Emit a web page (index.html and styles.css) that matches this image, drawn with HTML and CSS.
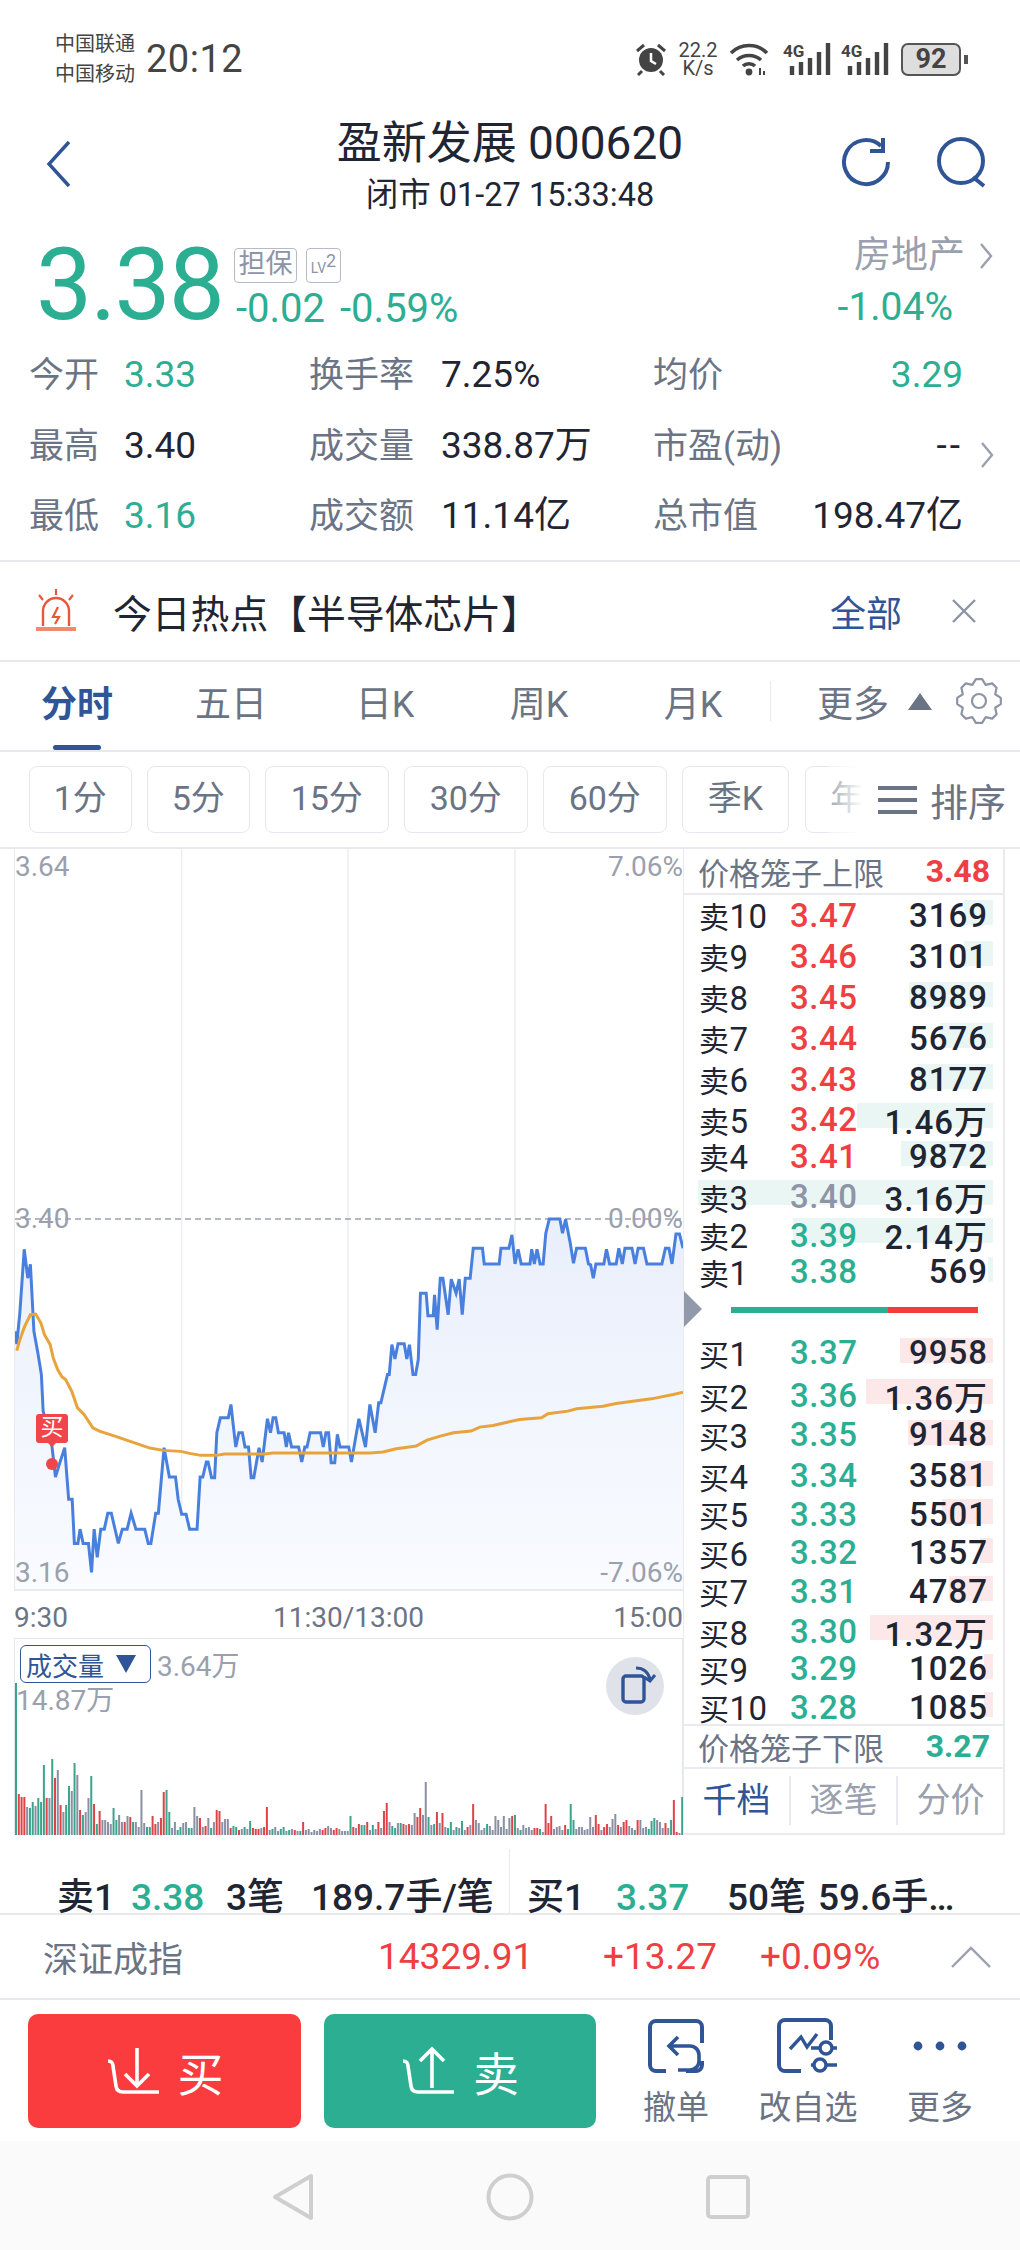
FILE: index.html
```html
<!DOCTYPE html>
<html lang="zh-CN">

<head>
    <meta charset="UTF-8">
    <title>盈新发展 000620</title>
    <link rel="stylesheet" href="styles.css">
</head>

<body>
    <div class="page">
        <!-- 状态栏 -->
        <div class="status">
            <div class="carrier"><span>中国联通</span><span>中国移动</span></div>
            <div class="clock">20:12</div>
            <div class="status-right">
                <svg class="st-alarm" viewBox="0 0 32 34" width="32" height="34">
                    <circle cx="16" cy="18" r="12" fill="#444"/>
                    <path d="M16 11v8l5 3" fill="none" stroke="#fff" stroke-width="2.5"/>
                    <path d="M2 9l7-6M30 9l-7-6M7 29l-4 4M25 29l4 4" stroke="#444" stroke-width="3" fill="none"/>
                </svg>
                <div class="speed"><span>22.2</span><span>K/s</span></div>
                <svg class="st-wifi" viewBox="0 0 40 34" width="40" height="34">
                    <path d="M2 11c10-10 26-10 36 0M8 18c7-6 17-6 24 0M14 24c3-3 9-3 12 0" fill="none" stroke="#444" stroke-width="3.6"/>
                    <circle cx="20" cy="30" r="3.4" fill="#444"/>
                    <path d="M31 26v7M35 29v4" stroke="#444" stroke-width="2"/>
                </svg>
                <svg class="st-signal" viewBox="0 0 48 34" width="48" height="34">
                    <text x="0" y="15" class="st-4g">4G</text>
                    <path d="M9 24v9M18 20v13M27 16v17M36 10v23M45 1v32" stroke="#444" stroke-width="4.4" fill="none"/>
                </svg>
                <svg class="st-signal" viewBox="0 0 48 34" width="48" height="34">
                    <text x="0" y="15" class="st-4g">4G</text>
                    <path d="M9 24v9M18 20v13M27 16v17M36 10v23M45 1v32" stroke="#444" stroke-width="4.4" fill="none"/>
                </svg>
                <div class="battery">92</div>
                <div class="battery-tip"></div>
            </div>
        </div>

        <!-- 标题 -->
        <div class="head">
            <svg class="back" viewBox="0 0 26 48" width="26" height="48">
                <path d="M23 2L3 24l20 22" fill="none" stroke="#2f5597" stroke-width="3.4"/>
            </svg>
            <div class="head-title">
                <div class="stock-name">盈新发展 <span class="stock-code">000620</span></div>
                <div class="stock-time">闭市 01-27 15:33:48</div>
            </div>
            <div class="head-tools">
                <svg viewBox="0 0 52 52" width="52" height="52">
                    <path d="M47 26a22 22 0 1 1-7-16" fill="none" stroke="#2f5597" stroke-width="4"/>
                    <path d="M42 2v13H29" fill="none" stroke="#2f5597" stroke-width="4"/>
                </svg>
                <svg viewBox="0 0 52 52" width="52" height="52">
                    <circle cx="25" cy="25" r="22" fill="none" stroke="#2f5597" stroke-width="4"/>
                    <path d="M37 41l11 9" fill="none" stroke="#2f5597" stroke-width="4"/>
                </svg>
            </div>
        </div>

        <!-- 价格 -->
        <div class="quote">
            <div class="last green">3.38</div>
            <div class="quote-mid">
                <div class="tags"><span class="tag">担保</span><span class="tag tag-lv">LV<sup>2</sup></span></div>
                <div class="change green"><span>-0.02</span><span>-0.59%</span></div>
            </div>
            <div class="sector">
                <div class="sector-name">房地产
                    <svg class="chev" viewBox="0 0 16 28" width="16" height="28"><path d="M3 2l10 12L3 26" fill="none" stroke="#9aa0ae" stroke-width="2.4"/></svg>
                </div>
                <div class="sector-pct green">-1.04%</div>
            </div>
        </div>

        <div class="stats">
            <div class="stat"><span class="k k2">今开</span><span class="green">3.33</span></div>
            <div class="stat"><span class="k k3">换手率</span><span>7.25%</span></div>
            <div class="stat stat-end"><span class="k">均价</span><span class="green">3.29</span></div>
            <div class="stat"><span class="k k2">最高</span><span>3.40</span></div>
            <div class="stat"><span class="k k3">成交量</span><span>338.87万</span></div>
            <div class="stat stat-end"><span class="k">市盈(动)</span><span class="dashes">--</span></div>
            <div class="stat"><span class="k k2">最低</span><span class="green">3.16</span></div>
            <div class="stat"><span class="k k3">成交额</span><span>11.14亿</span></div>
            <div class="stat stat-end"><span class="k">总市值</span><span>198.47亿</span></div>
            <svg class="stat-more" viewBox="0 0 16 28" width="16" height="28"><path d="M3 2l10 12L3 26" fill="none" stroke="#9aa0ae" stroke-width="2.4"/></svg>
        </div>

        <!-- 今日热点 -->
        <div class="hot">
            <svg class="hot-icon" viewBox="0 0 44 44" width="44" height="44">
                <path d="M9 37V22a13 13 0 0 1 26 0v15" fill="none" stroke="#e8593b" stroke-width="2.4"/>
                <path d="M2 38h40v4H2z" fill="#f08a6c"/>
                <path d="M24 18l-5 10h6l-4 7" fill="none" stroke="#e8593b" stroke-width="2.2"/>
                <path d="M22 0v6M5 6l4 5M39 6l-4 5" stroke="#e8593b" stroke-width="2.2"/>
            </svg>
            <div class="hot-text">今日热点【半导体芯片】</div>
            <div class="hot-all">全部</div>
            <svg class="hot-close" viewBox="0 0 26 26" width="26" height="26"><path d="M2 2l22 22M24 2L2 24" stroke="#8d94a4" stroke-width="2.4"/></svg>
        </div>

        <!-- 周期切换 -->
        <div class="tabs">
            <div class="tab on">分时</div>
            <div class="tab">五日</div>
            <div class="tab">日K</div>
            <div class="tab">周K</div>
            <div class="tab">月K</div>
            <div class="tab-sep"></div>
            <div class="tab-more">更多</div>
            <div class="tri-up"></div>
            <svg class="gear" viewBox="0 0 48 48" width="48" height="48">
                <path d="M45.8 20.9L45.8 27.1 40.2 30.7 41.6 37.2 37.2 41.6 30.7 40.2 27.1 45.8 20.9 45.8 17.3 40.2 10.8 41.6 6.4 37.2 7.8 30.7 2.2 27.1 2.2 20.9 7.8 17.3 6.4 10.8 10.8 6.4 17.3 7.8 20.9 2.2 27.1 2.2 30.7 7.8 37.2 6.4 41.6 10.8 40.2 17.3z" fill="none" stroke="#8d94a4" stroke-width="2.2" stroke-linejoin="round"/>
                <circle cx="24" cy="24" r="7" fill="none" stroke="#8d94a4" stroke-width="2.2"/>
            </svg>
        </div>

        <div class="periods">
            <div class="period w1">1分</div>
            <div class="period w1">5分</div>
            <div class="period w2">15分</div>
            <div class="period w2">30分</div>
            <div class="period w2">60分</div>
            <div class="period w3">季K</div>
            <div class="period w3">年K</div>
            <div class="sort">
                <div class="sort-lines"><i></i><i></i><i></i></div>
                <span>排序</span>
            </div>
        </div>

        <div class="main">
            <div class="charts">
                <!-- 分时图 -->
                <div class="price-chart">
                    <svg class="price-svg" viewBox="33 -996 1519 2226" preserveAspectRatio="none">
                        <defs>
                            <linearGradient id="areaFill" x1="0" y1="0" x2="0" y2="1">
                                <stop offset="0" stop-color="#e9effb"/>
                                <stop offset="1" stop-color="#f9fbff"/>
                            </linearGradient>
                        </defs>
                        <path class="grid-line" d="M412 -996V1230M790 -996V1230M1170 -996V1230"/>
                        <polygon fill="url(#areaFill)" points="33,1230 33,455 37,493 44,400 54,208 62,295 68,253 76,455 85,520 93,585 97,695 117,800 125,893 135,850 146,805 155,960 163,960 168,1093 176,1093 181,1050 188,1093 200,1093 207,1180 213,1050 220,1135 228,1050 236,1050 244,1002 252,1002 268,1093 277,1050 288,1050 297,1002 308,1050 328,1050 336,1093 342,1093 353,1002 359,1002 372,805 384,893 398,893 404,960 412,1005 422,1005 430,1050 447,1050 454,893 460,893 468,848 472,848 480,895 487,895 492,760 500,715 518,715 524,675 535,803 542,760 550,760 556,803 564,803 570,895 576,895 588,805 595,848 607,718 614,760 620,715 626,715 632,760 645,760 650,803 655,760 662,803 678,803 685,848 692,803 697,803 704,760 728,760 734,803 740,760 746,760 752,850 760,850 766,765 772,803 792,803 798,848 815,718 830,803 840,675 852,760 860,670 865,670 880,585 884,585 890,495 897,538 904,492 918,492 924,538 930,495 938,585 944,585 950,540 955,340 968,340 972,408 984,408 987,345 993,450 1000,295 1006,295 1018,405 1025,298 1036,340 1043,298 1050,405 1057,295 1068,295 1075,205 1096,205 1100,252 1134,252 1138,205 1156,205 1163,165 1170,252 1177,208 1184,252 1204,252 1208,208 1214,252 1220,208 1227,252 1234,252 1240,160 1248,117 1272,117 1278,160 1285,118 1295,185 1303,250 1310,205 1330,205 1337,252 1342,255 1348,295 1354,252 1372,252 1378,208 1385,252 1400,252 1406,205 1414,252 1420,205 1436,205 1443,252 1450,205 1462,205 1470,252 1504,252 1512,205 1520,205 1527,252 1536,162 1544,162 1552,205 1552,1230"/>
                        <path class="base-line" d="M33 117H1552"/>
                        <polyline class="line-price" points="33,455 37,493 44,400 54,208 62,295 68,253 76,455 85,520 93,585 97,695 117,800 125,893 135,850 146,805 155,960 163,960 168,1093 176,1093 181,1050 188,1093 200,1093 207,1180 213,1050 220,1135 228,1050 236,1050 244,1002 252,1002 268,1093 277,1050 288,1050 297,1002 308,1050 328,1050 336,1093 342,1093 353,1002 359,1002 372,805 384,893 398,893 404,960 412,1005 422,1005 430,1050 447,1050 454,893 460,893 468,848 472,848 480,895 487,895 492,760 500,715 518,715 524,675 535,803 542,760 550,760 556,803 564,803 570,895 576,895 588,805 595,848 607,718 614,760 620,715 626,715 632,760 645,760 650,803 655,760 662,803 678,803 685,848 692,803 697,803 704,760 728,760 734,803 740,760 746,760 752,850 760,850 766,765 772,803 792,803 798,848 815,718 830,803 840,675 852,760 860,670 865,670 880,585 884,585 890,495 897,538 904,492 918,492 924,538 930,495 938,585 944,585 950,540 955,340 968,340 972,408 984,408 987,345 993,450 1000,295 1006,295 1018,405 1025,298 1036,340 1043,298 1050,405 1057,295 1068,295 1075,205 1096,205 1100,252 1134,252 1138,205 1156,205 1163,165 1170,252 1177,208 1184,252 1204,252 1208,208 1214,252 1220,208 1227,252 1234,252 1240,160 1248,117 1272,117 1278,160 1285,118 1295,185 1303,250 1310,205 1330,205 1337,252 1342,255 1348,295 1354,252 1372,252 1378,208 1385,252 1400,252 1406,205 1414,252 1420,205 1436,205 1443,252 1450,205 1462,205 1470,252 1504,252 1512,205 1520,205 1527,252 1536,162 1544,162 1552,205"/>
                        <polyline class="line-avg" points="37,513 44,480 55,440 68,405 80,403 92,430 100,465 113,495 120,535 130,570 140,592 148,600 162,635 175,685 190,705 210,745 225,755 260,770 300,788 320,797 340,806 370,813 410,816 430,822 455,828 490,828 510,824 600,824 620,821 840,821 870,818 900,808 945,800 970,782 1000,770 1030,760 1070,755 1090,743 1120,738 1180,720 1230,715 1245,703 1290,695 1310,688 1370,680 1400,672 1480,658 1530,645 1552,638"/>
                    </svg>
                    <span class="axis top-l">3.64</span>
                    <span class="axis top-r">7.06%</span>
                    <span class="axis mid-l">3.40</span>
                    <span class="axis mid-r">0.00%</span>
                    <span class="axis bot-l">3.16</span>
                    <span class="axis bot-r">-7.06%</span>
                    <div class="trade-mark">买</div>
                    <div class="trade-dot"></div>
                </div>
                <div class="times"><span>9:30</span><span>11:30/13:00</span><span class="time-end">15:00</span></div>
                <!-- 成交量 -->
                <div class="vol-chart">
                    <svg id="volBars" class="vol-svg" viewBox="0 0 669 197"></svg>
                    <div class="vol-head">
                        <div class="vol-select">成交量 <i></i></div>
                        <span class="vol-num">3.64万</span>
                    </div>
                    <div class="vol-num vol-max">14.87万</div>
                    <div class="rotate">
                        <svg viewBox="0 0 58 58" width="58" height="58">
                            <rect x="17" y="19" width="21" height="26" rx="3" fill="none" stroke="#2f5597" stroke-width="3.4"/>
                            <path d="M30 11c7 0 12 4 14 11M38 20l6 4 5-6" fill="none" stroke="#2f5597" stroke-width="3"/>
                        </svg>
                    </div>
                </div>
            </div>

            <!-- 五档盘口 -->
            <div class="book">
                <div class="limit limit-top"><span>价格笼子上限</span><b class="red">3.48</b></div>
                <ul class="rows rows-sell">
                    <li class="row tall"><i class="depth ask" style="width:29px"></i><span><em>卖</em>10</span><span class="px red">3.47</span><span class="qty">3169</span></li>
                    <li class="row tall"><i class="depth ask" style="width:29px"></i><span><em>卖</em>9</span><span class="px red">3.46</span><span class="qty">3101</span></li>
                    <li class="row tall"><i class="depth ask" style="width:84px"></i><span><em>卖</em>8</span><span class="px red">3.45</span><span class="qty">8989</span></li>
                    <li class="row tall"><i class="depth ask" style="width:53px"></i><span><em>卖</em>7</span><span class="px red">3.44</span><span class="qty">5676</span></li>
                    <li class="row"><i class="depth ask" style="width:76px"></i><span><em>卖</em>6</span><span class="px red">3.43</span><span class="qty">8177</span></li>
                    <li class="row"><i class="depth ask" style="width:136px"></i><span><em>卖</em>5</span><span class="px red">3.42</span><span class="qty">1.46万</span></li>
                    <li class="row"><i class="depth ask" style="width:92px"></i><span><em>卖</em>4</span><span class="px red">3.41</span><span class="qty">9872</span></li>
                    <li class="row"><i class="depth ask" style="width:295px"></i><span><em>卖</em>3</span><span class="px gray">3.40</span><span class="qty">3.16万</span></li>
                    <li class="row"><i class="depth ask" style="width:200px"></i><span><em>卖</em>2</span><span class="px green">3.39</span><span class="qty">2.14万</span></li>
                    <li class="row"><i class="depth ask" style="width:5px"></i><span><em>卖</em>1</span><span class="px green">3.38</span><span class="qty">569</span></li>
                </ul>
                <div class="ratio"><i class="ratio-g"></i><i class="ratio-r"></i></div>
                <ul class="rows rows-buy">
                    <li class="row tall"><i class="depth bid" style="width:93px"></i><span><em>买</em>1</span><span class="px green">3.37</span><span class="qty">9958</span></li>
                    <li class="row tall"><i class="depth bid" style="width:127px"></i><span><em>买</em>2</span><span class="px green">3.36</span><span class="qty">1.36万</span></li>
                    <li class="row tall"><i class="depth bid" style="width:85px"></i><span><em>买</em>3</span><span class="px green">3.35</span><span class="qty">9148</span></li>
                    <li class="row"><i class="depth bid" style="width:33px"></i><span><em>买</em>4</span><span class="px green">3.34</span><span class="qty">3581</span></li>
                    <li class="row"><i class="depth bid" style="width:51px"></i><span><em>买</em>5</span><span class="px green">3.33</span><span class="qty">5501</span></li>
                    <li class="row"><i class="depth bid" style="width:13px"></i><span><em>买</em>6</span><span class="px green">3.32</span><span class="qty">1357</span></li>
                    <li class="row"><i class="depth bid" style="width:44px"></i><span><em>买</em>7</span><span class="px green">3.31</span><span class="qty">4787</span></li>
                    <li class="row"><i class="depth bid" style="width:123px"></i><span><em>买</em>8</span><span class="px green">3.30</span><span class="qty">1.32万</span></li>
                    <li class="row"><i class="depth bid" style="width:9px"></i><span><em>买</em>9</span><span class="px green">3.29</span><span class="qty">1026</span></li>
                    <li class="row"><i class="depth bid" style="width:9px"></i><span><em>买</em>10</span><span class="px green">3.28</span><span class="qty">1085</span></li>
                </ul>
                <div class="limit limit-bottom"><span>价格笼子下限</span><b class="green">3.27</b></div>
                <div class="book-tabs">
                    <div class="book-tab on">千档</div>
                    <div class="book-tab">逐笔</div>
                    <div class="book-tab">分价</div>
                </div>
            </div>
        </div>

        <!-- 买一卖一 -->
        <div class="level1">
            <div class="level-half level-sell">
                <span>卖1</span><span class="green">3.38</span><span>3笔</span><span>189.7手/笔</span>
            </div>
            <div class="level-half level-buy">
                <span>买1</span><span class="green">3.37</span><span>50笔</span><span>59.6手…</span>
            </div>
        </div>

        <!-- 指数 -->
        <div class="index-bar">
            <span class="index-name">深证成指</span>
            <span class="red">14329.91</span>
            <span class="red">+13.27</span>
            <span class="red">+0.09%</span>
            <svg viewBox="0 0 40 22" width="40" height="22"><path d="M1 21L20 2l19 19" fill="none" stroke="#9aa0ae" stroke-width="2.4"/></svg>
        </div>

        <!-- 底部操作 -->
        <div class="actions">
            <div class="btn btn-buy">
                <svg viewBox="0 0 56 50" width="56" height="50">
                    <path d="M2 15c3 0 5 2 5 5l3 20c.5 4 3 6 7 6h36" fill="none" stroke="#fff" stroke-width="3.6"/>
                    <path d="M31 2v38M19 28l12 12 12-12" fill="none" stroke="#fff" stroke-width="3.6"/>
                </svg>
                <span>买</span>
            </div>
            <div class="btn btn-sell">
                <svg viewBox="0 0 56 50" width="56" height="50">
                    <path d="M2 15c3 0 5 2 5 5l3 20c.5 4 3 6 7 6h36" fill="none" stroke="#fff" stroke-width="3.6"/>
                    <path d="M31 42V3M19 15L31 3l12 12" fill="none" stroke="#fff" stroke-width="3.6"/>
                </svg>
                <span>卖</span>
            </div>
            <div class="tools">
                <div class="tool">
                    <svg viewBox="0 0 60 56" width="60" height="56">
                        <path d="M20 53H10a6 6 0 0 1-6-6V9a6 6 0 0 1 6-6h40a6 6 0 0 1 6 6v16M40 53h10a6 6 0 0 0 6-6v-4" fill="none" stroke="#2f5597" stroke-width="4"/>
                        <path d="M32 19l-9 9 9 9M24 28h20a9 9 0 0 1 9 9v6a9 9 0 0 1-9 9H32" fill="none" stroke="#2f5597" stroke-width="3.6"/>
                    </svg>
                    <span>撤单</span>
                </div>
                <div class="tool">
                    <svg viewBox="0 0 62 56" width="62" height="56">
                        <path d="M24 53H8a6 6 0 0 1-6-6V8a6 6 0 0 1 6-6h40a6 6 0 0 1 6 6v14" fill="none" stroke="#2f5597" stroke-width="4"/>
                        <path d="M13 31l11-12 6 10 10-13" fill="none" stroke="#2f5597" stroke-width="3.4"/>
                        <path d="M34 30h26M34 47h26" stroke="#2f5597" stroke-width="3.4"/>
                        <circle cx="49" cy="30" r="6" fill="#fff" stroke="#2f5597" stroke-width="3.4"/>
                        <circle cx="43" cy="47" r="6" fill="#fff" stroke="#2f5597" stroke-width="3.4"/>
                    </svg>
                    <span>改自选</span>
                </div>
                <div class="tool">
                    <svg viewBox="0 0 56 56" width="56" height="56">
                        <circle cx="6" cy="28" r="4.4" fill="#2f5597"/>
                        <circle cx="28" cy="28" r="4.4" fill="#2f5597"/>
                        <circle cx="50" cy="28" r="4.4" fill="#2f5597"/>
                    </svg>
                    <span>更多</span>
                </div>
            </div>
        </div>

        <!-- 系统导航 -->
        <div class="nav">
            <svg viewBox="0 0 42 48" width="42" height="48"><path d="M39 3v42L3 24z" fill="none" stroke="#cfcfcf" stroke-width="4" stroke-linejoin="round"/></svg>
            <svg viewBox="0 0 48 48" width="48" height="48"><circle cx="24" cy="24" r="21.5" fill="none" stroke="#cfcfcf" stroke-width="4"/></svg>
            <svg viewBox="0 0 44 44" width="44" height="44"><rect x="2" y="2" width="40" height="40" rx="3" fill="none" stroke="#cfcfcf" stroke-width="4"/></svg>
        </div>
    </div>
    <script src="script.js"></script>
</body>

</html>
```

FILE: styles.css
```css
html,
body,
div,
ul,
li {
    padding: 0;
    margin: 0;
}

ul {
    list-style: none;
}

i,
em {
    font-style: normal;
}

body {
    background-color: #fff;
    color: #1f2533;
    font-family: Roboto, "Noto Sans CJK SC", sans-serif;
}

.page {
    width: 1020px;
    height: 2250px;
    overflow: hidden;
}

.green {
    color: #2cae92;
}

.red {
    color: #ee3f42;
}

.gray {
    color: #8d94a8;
}

/* 状态栏 */

.status {
    height: 100px;
    display: flex;
    align-items: center;
    padding: 18px 0 0 55px;
    box-sizing: border-box;
    color: #444;
}

.carrier {
    display: flex;
    flex-direction: column;
    width: 91px;
    font-size: 20px;
    line-height: 30px;
}

.clock {
    font-size: 38px;
    letter-spacing: 0.5px;
}

.status-right {
    display: flex;
    align-items: center;
    margin-left: auto;
    padding-right: 52px;
}

.speed {
    display: flex;
    flex-direction: column;
    align-items: center;
    width: 42px;
    margin: 0 10px;
    font-size: 20px;
    line-height: 18px;
}

.st-signal {
    margin-left: 10px;
}

.st-wifi {
    margin-right: 4px;
}

.st-4g {
    font-family: Roboto, sans-serif;
    font-size: 17px;
    font-weight: 700;
    fill: #444;
}

.battery {
    width: 60px;
    height: 33px;
    margin-left: 12px;
    border: 2px solid #555;
    border-radius: 7px;
    box-sizing: border-box;
    background-color: #dedede;
    font-size: 27px;
    font-weight: 700;
    line-height: 29px;
    text-align: center;
}

.battery-tip {
    width: 4px;
    height: 9px;
    margin-left: 3px;
    background-color: #555;
}

/* 标题 */

.head {
    height: 120px;
    display: grid;
    grid-template-columns: 1fr auto 1fr;
    box-sizing: border-box;
    padding: 20px 32px 0 32px;
}

.back {
    margin: 20px 0 0 14px;
}

.head-title {
    text-align: center;
}

.stock-name {
    font-size: 45px;
    line-height: 46px;
    white-space: nowrap;
}

.stock-code {
    font-size: 46px;
}

.stock-time {
    margin-top: 6px;
    font-size: 32.5px;
    line-height: 44px;
    white-space: nowrap;
}

.head-tools {
    display: flex;
    justify-content: flex-end;
    gap: 43px;
    padding-top: 16px;
}

/* 价格 */

.quote {
    height: 120px;
    display: flex;
    padding: 14px 26px 0 36px;
    box-sizing: border-box;
}

.last {
    width: 198px;
    font-size: 100px;
    line-height: 102px;
    letter-spacing: -2px;
}

.tags {
    display: flex;
    gap: 9px;
    margin-top: 14px;
}

.tag {
    height: 35px;
    width: 63px;
    border: 1.5px solid #b6bac8;
    border-radius: 4px;
    box-sizing: border-box;
    color: #8d94a8;
    font-size: 27px;
    line-height: 31px;
    text-align: center;
}

.tag-lv {
    width: 35px;
    font-size: 14px;
    line-height: 38px;
}

.tag-lv sup {
    font-size: 18px;
    line-height: 0;
}

.change {
    display: flex;
    gap: 15px;
    margin-top: 4px;
    margin-left: 2px;
    font-size: 40px;
    line-height: 44px;
}

.sector {
    margin-left: auto;
    text-align: right;
}

.sector-name {
    display: flex;
    align-items: center;
    gap: 13px;
    justify-content: flex-end;
    color: #9aa0ae;
    font-size: 37px;
    line-height: 44px;
}

.sector-pct {
    margin-top: 7px;
    padding-right: 41px;
    font-size: 39px;
    line-height: 44px;
}

/* 行情数据 */

.stats {
    position: relative;
    height: 220px;
    display: grid;
    grid-template-columns: 280px 344px 310px;
    grid-auto-rows: 70.5px;
    padding: 0 0 0 29px;
    border-bottom: 2px solid #e8e9ec;
    font-size: 37px;
}

.stat {
    display: flex;
    align-items: baseline;
    line-height: 70px;
    white-space: nowrap;
}

.stat-end {
    justify-content: space-between;
}

.dashes {
    letter-spacing: 3px;
}

.stat-more {
    position: absolute;
    left: 979px;
    top: 101px;
}

.k {
    color: #6b7485;
    font-size: 35px;
}

.k2 {
    width: 95px;
}

.k3 {
    width: 132px;
}

/* 今日热点 */

.hot {
    height: 98px;
    display: flex;
    align-items: center;
    padding: 0 43px 0 34px;
    border-bottom: 2px solid #e8e9ec;
}

.hot-text {
    margin-left: 35px;
    font-size: 38.8px;
    white-space: nowrap;
}

.hot-all {
    margin-left: auto;
    color: #2f5597;
    font-size: 36px;
}

.hot-close {
    margin-left: 49px;
}

/* 周期切换 */

.tabs {
    height: 90px;
    display: flex;
    align-items: center;
    border-bottom: 2px solid #e8e9ec;
    box-sizing: border-box;
    color: #6b7485;
    font-size: 36px;
    padding-bottom: 10px;
}

.tab {
    position: relative;
    width: 154px;
    text-align: center;
}

.tab.on {
    color: #2f5597;
    font-weight: 700;
}

.tab.on::after {
    content: "";
    position: absolute;
    left: 53px;
    bottom: -23px;
    width: 48px;
    height: 5px;
    border-radius: 3px;
    background-color: #2f5597;
}

.tab-sep {
    width: 1px;
    height: 40px;
    background-color: #e8e9ec;
}

.tab-more {
    margin-left: 46px;
}

.tri-up {
    width: 0;
    height: 0;
    margin-left: 19px;
    border-left: 12px solid transparent;
    border-right: 12px solid transparent;
    border-bottom: 17px solid #6b7485;
}

.gear {
    margin-left: 23px;
}

.periods {
    position: relative;
    height: 97px;
    display: flex;
    align-items: flex-start;
    gap: 15.5px;
    padding: 14px 0 0 29px;
    box-sizing: border-box;
    border-bottom: 2px solid #e8e9ec;
    color: #6b7485;
    overflow: hidden;
}

.period {
    flex: none;
    height: 67px;
    box-sizing: border-box;
    border: 1.5px solid #e6e8ee;
    border-radius: 8px;
    font-size: 34px;
    line-height: 63px;
    text-align: center;
}

.w1 {
    width: 102.5px;
}

.w2 {
    width: 123.5px;
}

.w3 {
    width: 107px;
}

.sort {
    position: absolute;
    top: 0;
    right: 0;
    bottom: 0;
    width: 192px;
    display: flex;
    align-items: center;
    justify-content: flex-end;
    gap: 13px;
    padding-right: 14px;
    box-sizing: border-box;
    background: linear-gradient(90deg, rgba(255, 255, 255, .35), #fff 18%);
    color: #6b7485;
    font-size: 38px;
}

.sort-lines {
    display: flex;
    flex-direction: column;
    gap: 8px;
}

.sort-lines i {
    display: block;
    width: 39px;
    height: 4px;
    background-color: #6b7485;
}

/* 图表区 */

.main {
    height: 986px;
    display: flex;
}

.charts {
    width: 669px;
    margin-left: 14px;
    flex: none;
}

.price-chart {
    position: relative;
    height: 742px;
    box-sizing: border-box;
    border-left: 1px solid #e8eaee;
    border-bottom: 2px solid #e8eaee;
}

.price-svg {
    position: absolute;
    left: 0;
    top: 0;
    width: 100%;
    height: 100%;
}

.grid-line {
    fill: none;
    stroke: #eceef2;
    stroke-width: 1.5;
    vector-effect: non-scaling-stroke;
}

.base-line {
    fill: none;
    stroke: #9aa0ae;
    stroke-width: 1.5;
    stroke-dasharray: 6 4;
    vector-effect: non-scaling-stroke;
}

.line-price {
    fill: none;
    stroke: #4a80dd;
    stroke-width: 3;
    vector-effect: non-scaling-stroke;
}

.line-avg {
    fill: none;
    stroke: #e8a33d;
    stroke-width: 3;
    vector-effect: non-scaling-stroke;
}

.axis {
    position: absolute;
    color: #9aa0ae;
    font-size: 28px;
    line-height: 32px;
}

.top-l {
    left: 0;
    top: 2px;
}

.top-r {
    right: 0;
    top: 2px;
}

.mid-l {
    left: 0;
    top: 354px;
}

.mid-r {
    right: 0;
    top: 354px;
}

.bot-l {
    left: 0;
    bottom: 0;
}

.bot-r {
    right: 0;
    bottom: 0;
}

.trade-mark {
    position: absolute;
    left: 21px;
    top: 565px;
    width: 32px;
    height: 29px;
    border-radius: 3px;
    background-color: #f0454a;
    color: #fff;
    font-size: 23px;
    line-height: 28px;
    text-align: center;
}

.trade-mark::after {
    content: "";
    position: absolute;
    left: 12px;
    top: 29px;
    border-left: 4px solid transparent;
    border-right: 4px solid transparent;
    border-top: 4px solid #f0454a;
}

.trade-dot {
    position: absolute;
    left: 31px;
    top: 609px;
    width: 12px;
    height: 12px;
    border-radius: 50%;
    background-color: #f0454a;
}

.times {
    height: 47px;
    display: grid;
    grid-template-columns: 1fr auto 1fr;
    align-items: center;
    padding-top: 6px;
    box-sizing: border-box;
    color: #6b7485;
    font-size: 28px;
}

.time-end {
    text-align: right;
}

.vol-chart {
    position: relative;
    height: 197px;
    box-sizing: border-box;
    border: 1px solid #e4e6ea;
    border-bottom: 0;
}

.vol-svg {
    position: absolute;
    left: -1px;
    top: -1px;
    width: 669px;
    height: 197px;
}

.vol-head {
    position: absolute;
    left: 5px;
    top: 5px;
    display: flex;
    align-items: center;
    gap: 6px;
}

.vol-select {
    display: flex;
    align-items: center;
    gap: 12px;
    width: 131px;
    height: 38px;
    padding-left: 5px;
    box-sizing: border-box;
    border: 1.5px solid #2f5597;
    border-radius: 6px;
    color: #2f5597;
    font-size: 26px;
}

.vol-select i {
    width: 0;
    height: 0;
    border-left: 10px solid transparent;
    border-right: 10px solid transparent;
    border-top: 18px solid #2f5597;
}

.vol-num {
    color: #9aa0ae;
    font-size: 28px;
}

.vol-max {
    position: absolute;
    left: 1px;
    top: 39px;
}

.rotate {
    position: absolute;
    left: 591px;
    top: 18px;
    width: 58px;
    height: 58px;
    border-radius: 50%;
    background-color: #e0e2ea;
}

/* 五档盘口 */

.book {
    width: 322px;
    flex: none;
    box-sizing: border-box;
    border-left: 1px solid #e8eaee;
    border-right: 2px solid #e8eaee;
    border-bottom: 2px solid #e8eaee;
    height: 986px;
}

.limit {
    height: 45px;
    display: flex;
    align-items: center;
    justify-content: space-between;
    padding: 0 13px 0 14px;
    color: #6b7485;
    font-size: 31px;
}

.limit b {
    font-family: Roboto, sans-serif;
    font-size: 32px;
}

.limit-top {
    border-bottom: 2px solid #e8eaee;
    height: 44px;
}

.limit-bottom {
    border-top: 2px solid #e8eaee;
    border-bottom: 2px solid #e8eaee;
    height: 45px;
    box-sizing: border-box;
}

.rows-sell {
    margin-top: -2px;
}

.rows-buy {
    height: 393px;
}

.row {
    position: relative;
    height: 38.6px;
    display: grid;
    grid-template-columns: 91px 66px 1fr;
    align-items: center;
    padding: 0 15px 0 15px;
    font-size: 33px;
    letter-spacing: 0.5px;
    white-space: nowrap;
}

.row.tall {
    height: 41px;
}

.row span {
    position: relative;
}

.row em {
    font-size: 30px;
}

.px {
    text-align: right;
    font-weight: 500;
}

.qty {
    text-align: right;
    letter-spacing: 1px;
    font-weight: 500;
}

.depth {
    position: absolute;
    right: 10px;
    top: 7px;
    height: 25px;
}

.ask {
    background-color: #e9f6f3;
}

.bid {
    background-color: #fde8e9;
}

.ratio {
    position: relative;
    height: 42px;
    display: flex;
    align-items: center;
    padding-left: 47px;
}

.ratio::before {
    content: "";
    position: absolute;
    left: 0;
    top: 2px;
    border-left: 18px solid #9299aa;
    border-top: 18px solid transparent;
    border-bottom: 18px solid transparent;
}

.ratio-g {
    width: 157px;
    height: 6px;
    background-color: #2cae92;
}

.ratio-r {
    width: 90px;
    height: 6px;
    background-color: #f23d3d;
}

.book-tabs {
    height: 63px;
    display: flex;
    align-items: center;
    color: #9aa0ae;
    font-size: 34px;
}

.book-tab {
    flex: 1;
    height: 49px;
    line-height: 49px;
    text-align: center;
    border-left: 2px solid #e8eaee;
}

.book-tab:first-child {
    border-left: 0;
}

.book-tab.on {
    color: #2f5597;
}

/* 买一卖一 */

.level1 {
    height: 80px;
    display: flex;
    align-items: flex-end;
    font-size: 37px;
    font-weight: 500;
    border-bottom: 2px solid #e8e9ec;
    box-sizing: border-box;
}

.level-half {
    display: grid;
    align-items: center;
    height: 64px;
    white-space: nowrap;
    box-sizing: border-box;
}

.level-sell {
    width: 509px;
    padding-left: 57px;
    padding-top: 34px;
    line-height: 30px;
    grid-template-columns: 74px 95px 85px auto;
}

.level-buy {
    flex: 1;
    padding-left: 17px;
    padding-top: 34px;
    line-height: 30px;
    border-left: 1px solid #e8e9ec;
    grid-template-columns: 89px 111px 91px auto;
}

/* 指数 */

.index-bar {
    height: 85px;
    display: grid;
    grid-template-columns: 335px 225px 157px 191px 40px;
    align-items: center;
    padding-left: 43px;
    box-sizing: border-box;
    border-bottom: 2px solid #e8e9ec;
    font-size: 37px;
}

.index-name {
    color: #6b7485;
    font-size: 35px;
}

/* 底部操作 */

.actions {
    height: 141px;
    display: flex;
    padding: 14px 0 0 28px;
    box-sizing: border-box;
}

.btn {
    height: 114px;
    display: flex;
    align-items: center;
    justify-content: center;
    gap: 16px;
    border-radius: 10px;
    color: #fff;
    font-size: 46px;
}

.btn-buy {
    width: 273px;
    background-color: #fa3c3e;
}

.btn-sell {
    width: 272px;
    margin-left: 23px;
    background-color: #2cae92;
}

.tools {
    display: flex;
    margin-left: 14px;
}

.tool {
    width: 132px;
    display: flex;
    flex-direction: column;
    align-items: center;
    margin-top: 4px;
    color: #6b7485;
    font-size: 33px;
    line-height: 44px;
}

.tool svg {
    height: 56px;
    margin-bottom: 12px;
}

/* 系统导航 */

.nav {
    height: 111px;
    display: flex;
    align-items: center;
    background-color: #fafafa;
    padding: 0 0 0 272px;
    box-sizing: border-box;
}

.nav svg:nth-child(2) {
    margin-left: 172px;
}

.nav svg:nth-child(3) {
    margin-left: 172px;
}
```

FILE: script.js
```js
// 成交量柱：一天 240 根，高度和颜色（g 跌 r 涨 n 平）
var volHeights = [
    152, 41, 38, 38, 28, 27, 33, 29, 37, 33,
    70, 37, 37, 76, 57, 65, 30, 23, 30, 49,
    44, 72, 60, 25, 20, 23, 37, 59, 31, 11,
    24, 15, 15, 13, 11, 27, 15, 20, 13, 13,
    19, 18, 13, 13, 8, 45, 12, 8, 8, 19,
    11, 13, 17, 43, 45, 23, 7, 13, 5, 8,
    12, 13, 7, 7, 28, 19, 17, 8, 9, 17,
    7, 13, 25, 24, 13, 16, 16, 7, 9, 8,
    5, 6, 8, 6, 14, 7, 6, 6, 7, 8,
    28, 5, 6, 8, 4, 6, 8, 4, 5, 6,
    5, 4, 4, 13, 5, 6, 3, 5, 4, 6,
    5, 7, 9, 7, 5, 7, 6, 4, 4, 4,
    19, 8, 7, 11, 10, 10, 13, 5, 10, 6,
    13, 7, 24, 32, 13, 9, 7, 12, 12, 11,
    10, 11, 10, 22, 18, 27, 20, 53, 18, 10,
    11, 23, 12, 22, 8, 7, 13, 5, 8, 7,
    14, 5, 8, 10, 31, 15, 12, 5, 7, 11,
    9, 5, 19, 15, 8, 19, 6, 17, 19, 20,
    7, 5, 10, 7, 8, 5, 7, 7, 6, 3,
    31, 12, 19, 6, 8, 9, 5, 10, 6, 31,
    15, 6, 8, 8, 5, 6, 18, 8, 20, 11,
    5, 8, 11, 8, 16, 21, 10, 8, 13, 15,
    9, 7, 5, 15, 15, 7, 8, 6, 14, 17,
    15, 13, 7, 12, 7, 15, 35, 3, 2, 38
];

var volColors =
    'grrrnggngg' + 'grngrnrngg' + 'ngnrgnngrg' + 'rnnnnggnnr' +
    'nrgnnnnggr' + 'rnrrggnngg' + 'nnggnnrnrn' + 'gnrrnnnrgg' +
    'rngngrrrnr' + 'rngnnggngn' + 'rngrnnnnnn' + 'rrnnrrnnnn' +
    'grnrggrngn' + 'rnrrnggngr' + 'nrnnrrnngn' + 'grnrnggngn' +
    'gnrnrnnnng' + 'nnnnnnnnrg' + 'ngnnnnrrgn' + 'rrrnnnnrgg' +
    'gnnnnnnnrr' + 'nrrnnnrnrr' + 'nngrnnnggg' + 'nnnrngrrng';

window.onload = function() {
    var svg = document.querySelector('#volBars');
    var colorMap = { g: '#3aa58c', r: '#de4347', n: '#8b8fa3' };
    var step = 669 / 240;

    for (var i = 0; i < volHeights.length; i++) {
        var bar = document.createElementNS('http://www.w3.org/2000/svg', 'rect');
        bar.setAttribute('x', (1 + i * step).toFixed(2));
        bar.setAttribute('y', 197 - volHeights[i]);
        bar.setAttribute('width', 2);
        bar.setAttribute('height', volHeights[i]);
        bar.setAttribute('fill', colorMap[volColors.charAt(i)] || colorMap.n);
        svg.appendChild(bar);
    }
};
```
